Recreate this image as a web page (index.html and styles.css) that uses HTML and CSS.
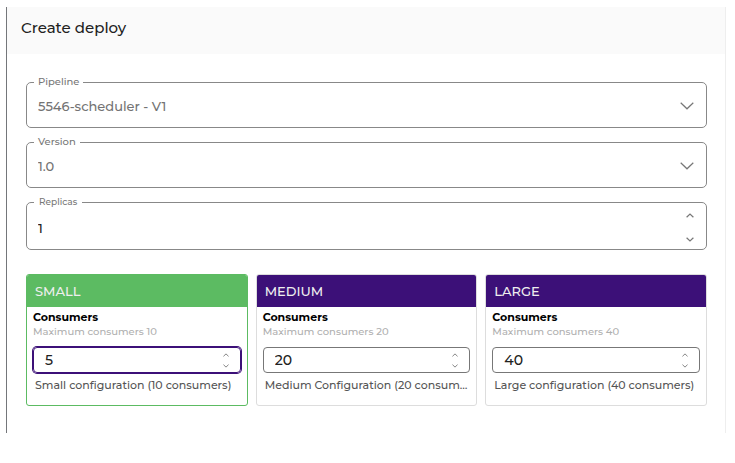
FILE: index.html
```html
<!DOCTYPE html>
<html lang="en">
<head>
<meta charset="utf-8">
<meta name="viewport" content="width=device-width, initial-scale=1">
<title>Create deploy</title>
<link rel="stylesheet" href="styles.css">
</head>
<body>
<svg width="0" height="0" class="sprite" aria-hidden="true">
  <symbol id="down" viewBox="0 0 14 8"><path d="M.7.7 7 6.8 13.3.7"/></symbol>
  <symbol id="step-up" viewBox="0 0 8 5"><path d="M.6 4.3 4 1l3.4 3.3"/></symbol>
  <symbol id="step-down" viewBox="0 0 8 5"><path d="M.6.7 4 4 7.4.7"/></symbol>
</svg>
<main class="panel">
  <header class="panel-header"><h1>Create deploy</h1></header>
  <form class="form">
    <fieldset class="field">
      <legend><label for="pipeline">Pipeline</label></legend>
      <div class="select">
        <select id="pipeline"><option>5546-scheduler - V1</option></select>
        <svg class="chevron" aria-hidden="true"><use href="#down"/></svg>
      </div>
    </fieldset>
    <fieldset class="field">
      <legend><label for="version">Version</label></legend>
      <div class="select">
        <select id="version"><option>1.0</option></select>
        <svg class="chevron" aria-hidden="true"><use href="#down"/></svg>
      </div>
    </fieldset>
    <fieldset class="field field-number">
      <legend><label for="replicas">Replicas</label></legend>
      <div class="number">
        <input id="replicas" type="number" value="1">
        <div class="stepper">
          <button type="button" aria-label="Increase replicas"><svg><use href="#step-up"/></svg></button>
          <button type="button" aria-label="Decrease replicas"><svg><use href="#step-down"/></svg></button>
        </div>
      </div>
    </fieldset>
    <div class="cards">
      <section class="card card-selected">
        <h2>SMALL</h2>
        <div class="card-body">
          <label for="small">Consumers</label>
          <p class="limit">Maximum consumers 10</p>
          <div class="number number-boxed">
            <input id="small" type="number" value="5">
            <div class="stepper">
              <button type="button" aria-label="Increase consumers"><svg><use href="#step-up"/></svg></button>
              <button type="button" aria-label="Decrease consumers"><svg><use href="#step-down"/></svg></button>
            </div>
          </div>
          <p class="note">Small configuration (10 consumers)</p>
        </div>
      </section>
      <section class="card">
        <h2>MEDIUM</h2>
        <div class="card-body">
          <label for="medium">Consumers</label>
          <p class="limit">Maximum consumers 20</p>
          <div class="number number-boxed">
            <input id="medium" type="number" value="20">
            <div class="stepper">
              <button type="button" aria-label="Increase consumers"><svg><use href="#step-up"/></svg></button>
              <button type="button" aria-label="Decrease consumers"><svg><use href="#step-down"/></svg></button>
            </div>
          </div>
          <p class="note">Medium Configuration (20 consumers)</p>
        </div>
      </section>
      <section class="card">
        <h2>LARGE</h2>
        <div class="card-body">
          <label for="large">Consumers</label>
          <p class="limit">Maximum consumers 40</p>
          <div class="number number-boxed">
            <input id="large" type="number" value="40">
            <div class="stepper">
              <button type="button" aria-label="Increase consumers"><svg><use href="#step-up"/></svg></button>
              <button type="button" aria-label="Decrease consumers"><svg><use href="#step-down"/></svg></button>
            </div>
          </div>
          <p class="note">Large configuration (40 consumers)</p>
        </div>
      </section>
    </div>
  </form>
</main>
</body>
</html>
```
FILE: styles.css
```css
* { box-sizing: border-box; }

body {
  margin: 0;
  padding: 7px 9px 0 6px;
  background: #fff;
  color: #222;
  font-family: Montserrat, Inter, sans-serif;
  font-weight: 500;
}

h1, h2, p { margin: 0; font-weight: 500; }

.sprite { position: absolute; }

svg { fill: none; stroke: #777; stroke-width: 1.2; }

.panel {
  border-left: 1px solid #74767a;
  border-right: 1px solid #eee;
}

.panel-header {
  padding: 9px 14px 14px;
  background: #fafafa;
}

h1 { font-size: 15px; line-height: 24px; }

.form { padding: 21px 18px 27px 19px; }

.field {
  min-width: 0;
  margin: 0 0 7px;
  padding: 0;
  border: 1px solid #888;
  border-radius: 5px;
}

.field legend {
  margin-left: 7px;
  padding: 0 4px;
  color: #777;
  font-size: 10px;
  line-height: 14px;
}

.field label { display: block; }

select, input {
  width: 100%;
  margin: 0;
  border: 0;
  outline: 0;
  background: transparent;
  font: inherit;
  appearance: none;
}

.select { display: grid; align-items: center; }

.select select,
.select .chevron { grid-area: 1 / 1; }

.select select {
  height: 38px;
  padding: 0 40px 4px 11px;
  color: #737373;
  font-size: 13px;
}

.chevron {
  width: 14px;
  height: 8px;
  margin: 0 12px 4px 0;
  justify-self: end;
  pointer-events: none;
}

.number { display: flex; color: #222; font-size: 14px; }

.number input {
  flex: 1;
  min-width: 0;
  padding: 0 0 0 11px;
  color: inherit;
  appearance: textfield;
}

.number input::-webkit-inner-spin-button { appearance: none; margin: 0; }

.stepper {
  display: flex;
  flex-direction: column;
  justify-content: space-between;
}

.stepper button {
  display: grid;
  place-items: center;
  width: 16px;
  height: 9px;
  padding: 0;
  border: 0;
  background: none;
}

.stepper svg { width: 8px; height: 5px; }

.field-number { font-size: 13px; }

.field-number legend { padding: 0 5px; font-size: 9px; }

.field-number .number {
  height: 40px;
  padding: 2px 8px 5px 0;
  font-size: 13px;
}

.cards {
  display: grid;
  grid-template-columns: repeat(3, minmax(0, 1fr));
  gap: 8px;
  margin-top: 24px;
}

.card {
  border: 1px solid #ddd;
  border-radius: 3px;
  overflow: hidden;
}

.card h2 {
  padding: 0 8px;
  background: #3c1078;
  color: #eee;
  font-size: 13px;
  line-height: 32px;
}

.card-selected { border-color: #5cbb62; }

.card-selected h2 { background: #5cbb62; }

.card-body { padding: 3px 6px 11px; }

.card-body label {
  display: block;
  color: #000;
  font-size: 11px;
  font-weight: 700;
  line-height: 15px;
}

.limit { color: #b0b0b0; font-size: 10px; line-height: 14px; }

.number-boxed {
  height: 26px;
  margin-top: 8px;
  padding: 2px 6px 2px 0;
  border: 1px solid #777;
  border-radius: 4px;
}

.number-boxed .stepper svg { width: 6px; height: 4px; }

.card-selected .number-boxed {
  border-color: #3c1078;
  box-shadow: 0 0 0 1px #3c1078;
}

.note {
  padding-left: 2px;
  margin-top: 3px;
  color: #555;
  font-size: 11px;
  line-height: 18px;
  overflow: hidden;
  text-overflow: ellipsis;
  white-space: nowrap;
}
```
